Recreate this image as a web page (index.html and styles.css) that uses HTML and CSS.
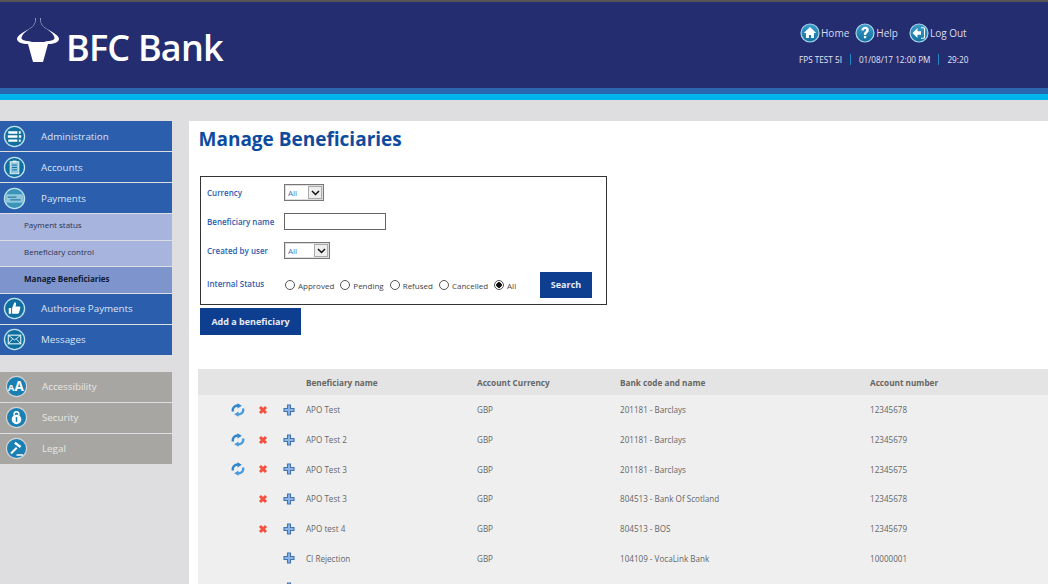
FILE: index.html
```html
<!DOCTYPE html>
<html lang="en">
<head>
  <meta charset="UTF-8">
  <title>Manage Beneficiaries</title>
  <link rel="stylesheet" href="styles.css">
</head>
<body>

<svg class="defs" width="0" height="0">
  <defs>
    <linearGradient id="disc" x1="0" y1="0" x2="0" y2="1">
      <stop offset="0" stop-color="#3f9fca"/>
      <stop offset="1" stop-color="#0f6f9f"/>
    </linearGradient>
    <symbol id="i-sync" viewBox="0 0 14 14">
      <path d="M2 8.500C1 5 3.500 2.500 7 2.500" fill="none" stroke="#2f86cf" stroke-width="2.400"/>
      <path d="M6.500.2 10.800 2.800 6.500 5.400Z" fill="#2f86cf"/>
      <path d="M12 5.500C13 9 10.500 11.500 7 11.500" fill="none" stroke="#4a9ade" stroke-width="2.400"/>
      <path d="M7.500 13.800 3.200 11.200 7.500 8.600Z" fill="#4a9ade"/>
    </symbol>
    <symbol id="i-del" viewBox="0 0 10 10">
      <path d="M2 2 8 8M8 2 2 8" stroke="#f5503c" stroke-width="3"/>
    </symbol>
    <symbol id="i-add" viewBox="0 0 12 12">
      <path d="M4.500 1h3v3.500H11v3H7.500V11h-3V7.500H1v-3h3.500Z" fill="#8fb3e0" stroke="#3f74b5" stroke-width="1.100"/>
    </symbol>
  </defs>
</svg>

<div class="header">
  <div class="logo">
    <svg class="bull" width="43" height="46" viewBox="0 0 43 46">
      <path d="M18.500 1C18.500 6 17 9 12 12 6 15 0 19 0 22c0 3 5 5 11 5l5 18h10l5-18c6 0 11-2 11-5 0-3-6-7-12-10-5-3-6.500-6-6.500-11H23c0 6 3 9 8 12 5 3 6.500 7 6.500 8 0 2-3.500 3-6.500 3-2 0-3 1-4 1H15c-1 0-2-1-4-1-3 0-6.500-1-6.500-3 0-1 1.500-5 6.500-8 5-3 8-6 8-12Z" fill="#fff"/>
    </svg>
    <span class="logo-text">BFC Bank</span>
  </div>
  <div class="top-right">
    <div class="top-links">
      <a class="top-link">
        <svg class="top-icon" viewBox="0 0 20 20"><circle cx="10" cy="10" r="9" fill="url(#disc)" stroke="#a9d6ea" stroke-width="1.200"/><path d="M10 4 3.800 10H6v5h3v-3h2v3h3v-5h2.200Z" fill="#fff"/></svg>Home
      </a>
      <a class="top-link">
        <svg class="top-icon" viewBox="0 0 20 20"><circle cx="10" cy="10" r="9" fill="url(#disc)" stroke="#a9d6ea" stroke-width="1.200"/><path d="M6.500 7.500C6.500 5 8.300 3.800 10.200 3.800c2.200 0 3.600 1.300 3.600 3.200 0 2.800-2.600 2.800-2.600 5H8.900c0-3.300 2.400-3.300 2.400-4.900 0-.7-.4-1.200-1.200-1.200-.9 0-1.300.6-1.300 1.500Z" fill="#fff"/><rect x="8.900" y="13" width="2.300" height="2.300" fill="#fff"/></svg>Help
      </a>
      <a class="top-link logout">
        <svg class="top-icon" viewBox="0 0 20 20"><circle cx="10" cy="10" r="9" fill="url(#disc)" stroke="#a9d6ea" stroke-width="1.200"/><path d="M8.500 5 3.500 10l5 5v-3.200h3.500V8.200H8.500Z" fill="#fff"/><path d="M12 4.800h2.500c.6 0 1 .4 1 1v8.400c0 .6-.4 1-1 1H12" fill="none" stroke="#fff" stroke-width="1.100"/></svg>Log Out
      </a>
    </div>
    <div class="session">
      <span>FPS TEST 5I</span>
      <span class="sep">01/08/17 12:00 PM</span>
      <span class="sep">29:20</span>
    </div>
  </div>
</div>
<div class="strip-blue"></div>
<div class="strip-cyan"></div>

<div class="page">
  <div class="sidebar">
    <div class="menu">
      <a class="menu-item">
        <svg class="menu-icon" viewBox="0 0 24 24"><circle cx="12" cy="12" r="10.500" fill="#0f6f9f" stroke="#bfe3ee" stroke-width="1.400"/><path d="M5.500 7.800h9.500M5 12h10M5.500 16.200h9.500M16.500 7.800h2M16.500 12h2.500M16.500 16.200h2" stroke="#fff" stroke-width="2.400"/></svg>
        Administration
      </a>
      <a class="menu-item">
        <svg class="menu-icon" viewBox="0 0 24 24"><circle cx="12" cy="12" r="10.500" fill="#0f6f9f" stroke="#bfe3ee" stroke-width="1.400"/><rect x="7.500" y="6" width="9" height="12.500" fill="#8fc6dc" stroke="#e6f4f8"/><path d="M9.500 9.500h5M9.500 12h5M9.500 14.500h5" stroke="#0f6f9f"/><rect x="10" y="4.800" width="4" height="2" fill="#e6f4f8"/></svg>
        Accounts
      </a>
      <a class="menu-item">
        <svg class="menu-icon" viewBox="0 0 24 24"><circle cx="12" cy="12" r="10.500" fill="#3a93b8" stroke="#bfe3ee" stroke-width="1.400"/><rect x="2.500" y="7.500" width="19" height="9" rx="2" fill="#8fc6dc"/><path d="M5 10.500h9M7.500 13.500h11" stroke="#2c7ea3" stroke-width="1.400"/></svg>
        Payments
      </a>
      <a class="sub-item">Payment status</a>
      <a class="sub-item">Beneficiary control</a>
      <a class="sub-item current">Manage Beneficiaries</a>
      <a class="menu-item">
        <svg class="menu-icon" viewBox="0 0 24 24"><circle cx="12" cy="12" r="10.500" fill="#0f6f9f" stroke="#bfe3ee" stroke-width="1.400"/><path d="M6 11.500h2.500v6H6ZM9.500 11.500 12 5.500c1.500 0 2 1 1.500 2.500l-.5 2h4c1 0 1.300 1 1 1.800l-1.300 4.700c-.2.700-.7 1-1.400 1H9.500Z" fill="#fff"/></svg>
        Authorise Payments
      </a>
      <a class="menu-item">
        <svg class="menu-icon" viewBox="0 0 24 24"><circle cx="12" cy="12" r="10.500" fill="#0f6f9f" stroke="#bfe3ee" stroke-width="1.400"/><rect x="5.500" y="7.500" width="13" height="9" fill="none" stroke="#d8eef5" stroke-width="1.200"/><path d="m5.500 7.500 6.500 5 6.500-5M5.500 16.500l4.500-5M18.500 16.500l-4.500-5" fill="none" stroke="#d8eef5"/></svg>
        Messages
      </a>
    </div>
    <div class="menu menu-grey">
      <a class="menu-item">
        <svg class="menu-icon" viewBox="0 0 24 24"><circle cx="12" cy="12" r="10.500" fill="#1a7fb3" stroke="#d4d4d4" stroke-width="1.200"/><text x="2.800" y="17" class="aa-small">A</text><text x="10" y="17" class="aa-big">A</text></svg>
        Accessibility
      </a>
      <a class="menu-item">
        <svg class="menu-icon" viewBox="0 0 24 24"><circle cx="12" cy="12" r="10.500" fill="#1a7fb3" stroke="#d4d4d4" stroke-width="1.200"/><circle cx="12" cy="14" r="5" fill="#fff"/><path d="M9.500 10V8.500a2.500 2.500 0 0 1 5 0V10" fill="none" stroke="#fff" stroke-width="1.400"/><rect x="11.200" y="11.500" width="1.600" height="5" fill="#1a7fb3"/></svg>
        Security
      </a>
      <a class="menu-item">
        <svg class="menu-icon" viewBox="0 0 24 24"><circle cx="12" cy="12" r="10.500" fill="#1a7fb3" stroke="#d4d4d4" stroke-width="1.200"/><path d="m11 5 6 4.500-1.500 2-6-4.500ZM11.500 10.500l-6 6 1.500 1.500 6-6ZM12 18h7v1.500h-7Z" fill="#fff"/></svg>
        Legal
      </a>
    </div>
  </div>

  <div class="main">
    <h1>Manage Beneficiaries</h1>

    <div class="filter">
      <div class="filter-row">
        <label class="filter-label">Currency</label>
        <div class="select select-short">All<span class="select-btn"><svg width="9" height="6" viewBox="0 0 9 6"><path d="m1 1 3.500 3.500L8 1" fill="none" stroke="#111" stroke-width="1.500"/></svg></span></div>
      </div>
      <div class="filter-row">
        <label class="filter-label">Beneficiary name</label>
        <input class="text-input" type="text">
      </div>
      <div class="filter-row">
        <label class="filter-label">Created by user</label>
        <div class="select select-long">All<span class="select-btn"><svg width="9" height="6" viewBox="0 0 9 6"><path d="m1 1 3.500 3.500L8 1" fill="none" stroke="#111" stroke-width="1.500"/></svg></span></div>
      </div>
      <div class="filter-row status-row">
        <label class="filter-label">Internal Status</label>
        <div class="radios">
          <span class="radio"><i class="dot"></i>Approved</span>
          <span class="radio"><i class="dot"></i>Pending</span>
          <span class="radio"><i class="dot"></i>Refused</span>
          <span class="radio"><i class="dot"></i>Cancelled</span>
          <span class="radio"><i class="dot on"></i>All</span>
        </div>
        <button class="btn search-btn">Search</button>
      </div>
    </div>

    <button class="btn add-btn">Add a beneficiary</button>

    <table class="list">
      <colgroup>
        <col class="c-sync"><col class="c-del"><col class="c-add"><col class="c-name"><col class="c-cur"><col class="c-bank"><col>
      </colgroup>
      <thead>
        <tr><th colspan="3"></th><th>Beneficiary name</th><th>Account Currency</th><th>Bank code and name</th><th>Account number</th></tr>
      </thead>
      <tbody>
        <tr>
          <td><svg class="act sync"><use href="#i-sync"/></svg></td><td><svg class="act del"><use href="#i-del"/></svg></td><td><svg class="act add"><use href="#i-add"/></svg></td>
          <td>APO Test</td><td>GBP</td><td>201181 - Barclays</td><td>12345678</td>
        </tr>
        <tr>
          <td><svg class="act sync"><use href="#i-sync"/></svg></td><td><svg class="act del"><use href="#i-del"/></svg></td><td><svg class="act add"><use href="#i-add"/></svg></td>
          <td>APO Test 2</td><td>GBP</td><td>201181 - Barclays</td><td>12345679</td>
        </tr>
        <tr>
          <td><svg class="act sync"><use href="#i-sync"/></svg></td><td><svg class="act del"><use href="#i-del"/></svg></td><td><svg class="act add"><use href="#i-add"/></svg></td>
          <td>APO Test 3</td><td>GBP</td><td>201181 - Barclays</td><td>12345675</td>
        </tr>
        <tr>
          <td></td><td><svg class="act del"><use href="#i-del"/></svg></td><td><svg class="act add"><use href="#i-add"/></svg></td>
          <td>APO Test 3</td><td>GBP</td><td>804513 - Bank Of Scotland</td><td>12345678</td>
        </tr>
        <tr>
          <td></td><td><svg class="act del"><use href="#i-del"/></svg></td><td><svg class="act add"><use href="#i-add"/></svg></td>
          <td>APO test 4</td><td>GBP</td><td>804513 - BOS</td><td>12345679</td>
        </tr>
        <tr>
          <td></td><td></td><td><svg class="act add"><use href="#i-add"/></svg></td>
          <td>CI Rejection</td><td>GBP</td><td>104109 - VocaLink Bank</td><td>10000001</td>
        </tr>
        <tr>
          <td></td><td></td><td><svg class="act add"><use href="#i-add"/></svg></td>
          <td></td><td></td><td></td><td></td>
        </tr>
      </tbody>
    </table>
  </div>
</div>

</body>
</html>
```

FILE: styles.css
```css
html, body {
  height: 584px;
  overflow: hidden;
}
body {
  margin: 0;
  background-color: #dedee0;
  font-family: "Open Sans", "Liberation Sans", sans-serif;
  font-size: 9px;
  color: #555;
}
.defs {
  display: block;
  height: 0;
}

/* header */
.header {
  height: 86px;
  display: flex;
  justify-content: space-between;
  background-color: #252d71;
  border-top: 2px solid #555;
}
.logo {
  display: flex;
  align-items: flex-start;
  padding: 15px 0 0 17px;
}
.logo-text {
  margin: 8px 0 0 6px;
  font-family: "Open Sans", sans-serif;
  font-size: 36px;
  font-weight: 600;
  letter-spacing: -0.8px;
  line-height: 46px;
  color: #fff;
}
.top-right {
  width: 249px;
  padding-top: 21px;
}
.top-links {
  display: flex;
  align-items: center;
  padding-left: 1px;
  font-size: 10px;
  color: #d8dcee;
}
.top-link {
  display: flex;
  align-items: center;
  margin-right: 6px;
}
.logout {
  margin-left: 5px;
}
.top-icon {
  width: 20px;
  height: 20px;
  margin-right: 1px;
}
.session {
  display: flex;
  align-items: center;
  margin-top: 11px;
  font-size: 8.200px;
  line-height: 11px;
  color: #e4e6f4;
}
.sep {
  margin-left: 8px;
  padding-left: 8px;
  border-left: 1px solid #1c86c0;
}
.strip-blue {
  height: 6px;
  background-color: #2b66b0;
}
.strip-cyan {
  height: 6px;
  background-color: #00b5ec;
}

/* sidebar */
.page {
  display: flex;
  padding-top: 21px;
}
.sidebar {
  flex: none;
  width: 172px;
  margin-right: 17px;
}
.menu {
  margin-bottom: 17px;
}
.menu-item {
  display: flex;
  align-items: center;
  height: 30px;
  margin-bottom: 1px;
  padding-left: 3px;
  background-color: #2b5ead;
  font-size: 9.800px;
  color: #dbe4f4;
}
.menu-icon {
  width: 23px;
  height: 23px;
  margin-right: 15px;
}
.menu-grey .menu-item {
  background-color: #a8a6a3;
  color: #e6e6e4;
}
.menu-grey .menu-icon {
  margin: 0 14px 0 2px;
}
.aa-small {
  font: 700 10px "Open Sans", sans-serif;
  fill: #fff;
}
.aa-big {
  font: 700 14px "Open Sans", sans-serif;
  fill: #fff;
}
.sub-item {
  box-sizing: border-box;
  display: flex;
  align-items: center;
  height: 25.670px;
  margin-bottom: 1px;
  padding: 0 0 4px 24px;
  background-color: #a6b4de;
  font-size: 8px;
  color: #2a3350;
}
.sub-item.current {
  background-color: #7e94cc;
  font-weight: 700;
  color: #111a33;
}

/* main */
.main {
  flex: 1;
  height: 463px;
  overflow: hidden;
  background-color: #fff;
}
h1 {
  margin: 0;
  padding: 5px 0 0 9.500px;
  font-size: 19px;
  font-weight: 700;
  line-height: 26px;
  color: #0e4b9e;
}
.filter {
  box-sizing: border-box;
  width: 407px;
  height: 129px;
  margin: 24px 0 3px 11px;
  padding: 1px 14px 0 6px;
  border: 1px solid #333;
}
.filter-row {
  display: flex;
  align-items: center;
  height: 29px;
}
.filter-label {
  flex: none;
  width: 77px;
  font-size: 8px;
  font-weight: 600;
  color: #2b5ead;
}
.select {
  box-sizing: border-box;
  display: flex;
  align-items: center;
  justify-content: space-between;
  height: 17px;
  padding-left: 3px;
  border: 1px solid #777;
  box-shadow: inset 0 0 0 1px #ddd;
  font-size: 8px;
  color: #4a70b8;
}
.select-short {
  width: 40px;
}
.select-long {
  width: 46px;
}
.select-btn {
  display: flex;
  align-items: center;
  justify-content: center;
  width: 14px;
  height: 13px;
  margin-right: 1px;
  background-color: #eee;
  border: 1px solid #aaa;
  box-sizing: border-box;
}
.text-input {
  box-sizing: border-box;
  width: 102px;
  height: 17px;
  padding: 0;
  border: 1px solid #666;
  background-color: #fff;
}
.status-row {
  height: 38px;
  margin-top: 1px;
  justify-content: space-between;
}
.status-row .filter-label {
  margin-top: -4px;
}
.radios {
  flex: 1;
  display: flex;
  align-items: center;
  padding-left: 1px;
  font-size: 8px;
  color: #444;
}
.radio {
  display: flex;
  align-items: center;
  margin-right: 6px;
}
.dot {
  box-sizing: border-box;
  width: 10px;
  height: 10px;
  margin-right: 3px;
  border: 1px solid #555;
  border-radius: 50%;
}
.dot.on {
  background: radial-gradient(circle, #111 0 2.500px, #fff 3px);
}
.btn {
  display: block;
  border: 0;
  background-color: #0e3e8f;
  font-family: "Open Sans", "Liberation Sans", sans-serif;
  font-size: 9px;
  font-weight: 700;
  color: #e8ecf6;
}
.search-btn {
  flex: none;
  width: 52px;
  height: 26px;
  margin-top: -1px;
}
.add-btn {
  width: 101px;
  height: 27px;
  margin-left: 11px;
}

/* beneficiaries table */
.list {
  width: 850px;
  margin: 34px 0 0 9px;
  border-collapse: collapse;
  table-layout: fixed;
  background-color: #efefef;
}
.list th {
  height: 26px;
  padding: 0;
  background-color: #e4e4e4;
  font-size: 8.200px;
  font-weight: 700;
  text-align: left;
  color: #666;
}
.list td {
  height: 29.700px;
  padding: 0;
  font-size: 8.100px;
  color: #666;
}
.c-sync {
  width: 47px;
}
.c-del {
  width: 36px;
}
.c-add {
  width: 25px;
}
.c-name {
  width: 171px;
}
.c-cur {
  width: 143px;
}
.c-bank {
  width: 250px;
}
.act {
  display: block;
}
.sync {
  width: 14px;
  height: 14px;
  margin-left: auto;
}
.del {
  width: 10px;
  height: 10px;
  margin: 0 auto;
}
.add {
  width: 12px;
  height: 12px;
  margin-left: 2px;
}
```
